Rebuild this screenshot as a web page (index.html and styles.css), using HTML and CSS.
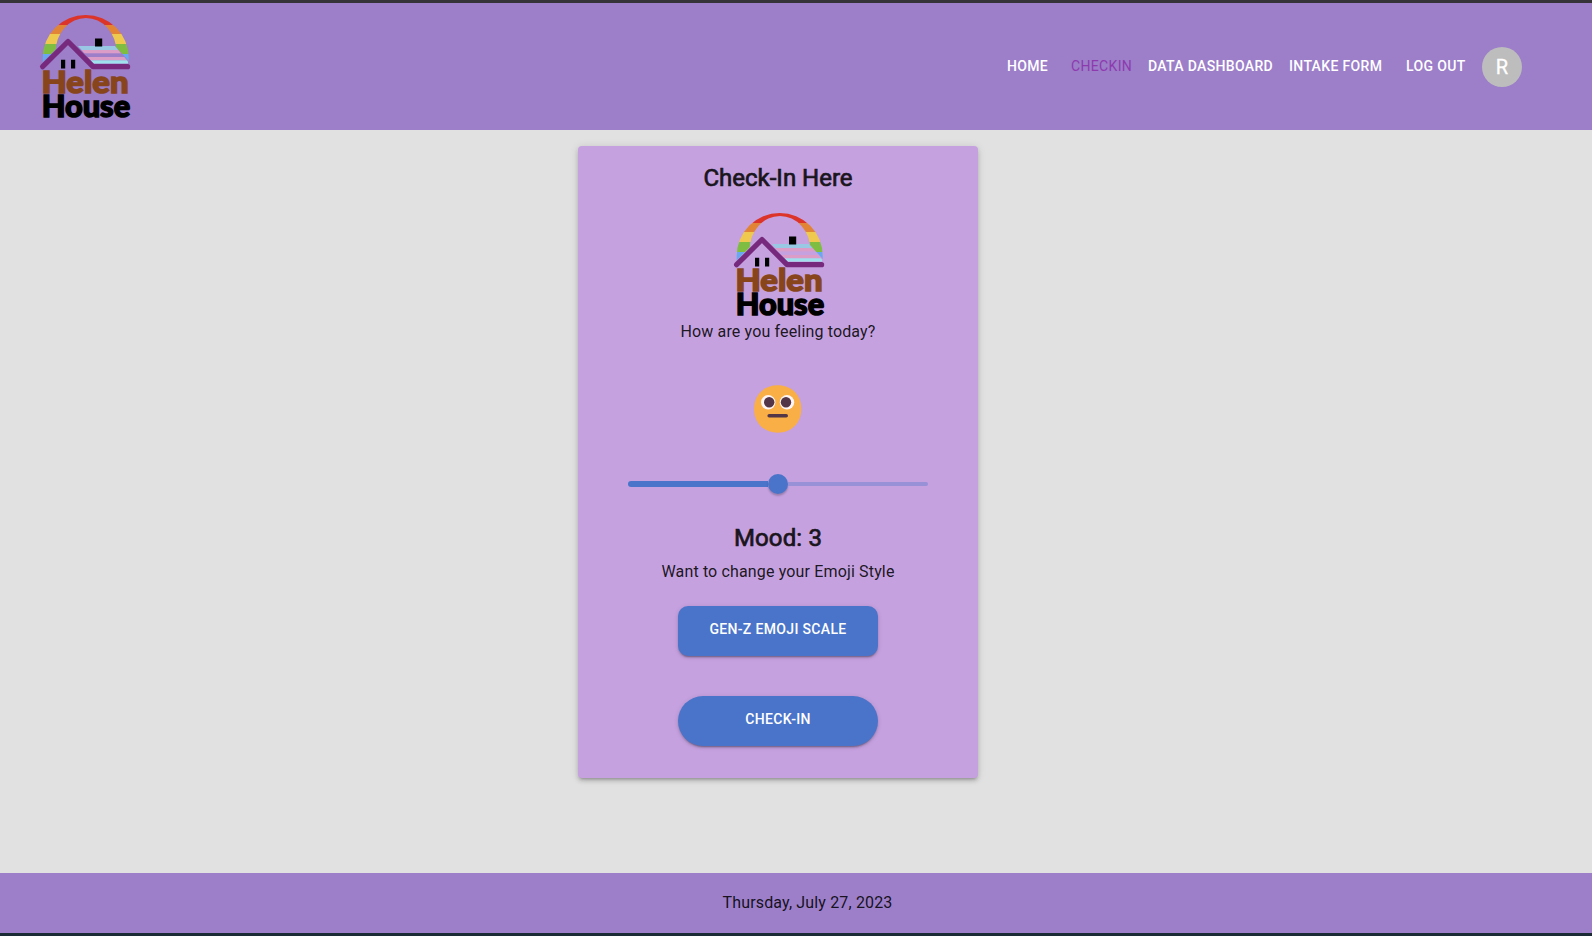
FILE: index.html
```html
<!DOCTYPE html>
<html lang="en">
<head>
<meta charset="utf-8">
<title>Helen House Check-In</title>
<link rel="stylesheet" href="styles.css">
</head>
<body>
<svg class="defs" aria-hidden="true">
  <defs>
    <clipPath id="arch"><path d="M0 0H92V49.5L75 31H31L27 23L0 50Z"/></clipPath>
    <clipPath id="flag"><path d="M38 31H75L88 46.5V49H54Z"/></clipPath>
    <clipPath id="ring"><path clip-rule="evenodd" d="M2.7 43a43 43 0 0 1 86 0v7h-86ZM15.5 37a30.5 34 0 0 1 61 0v13h-61Z"/></clipPath>
  </defs>
  <symbol id="logo" viewBox="0 0 92 106" overflow="visible">
    <g clip-path="url(#arch)"><g clip-path="url(#ring)">
      <rect width="92" height="10" fill="#dc3428"/>
      <rect y="10" width="92" height="9" fill="#e28436"/>
      <rect y="19" width="92" height="10" fill="#efc84e"/>
      <rect y="29" width="92" height="10" fill="#7fbd42"/>
      <rect y="39" width="92" height="11" fill="#68a8f0"/>
    </g></g>
    <g clip-path="url(#flag)">
      <rect y="31" width="92" height="4" fill="#98c8e4"/>
      <rect y="35" width="92" height="3.3" fill="#dc9cc8"/>
      <rect y="42" width="92" height="3.3" fill="#dc9cc8"/>
      <rect y="45.3" width="92" height="3.2" fill="#a0e0ec"/>
    </g>
    <path class="roof" d="M2.6 51.7L28 26.5L53 51.7H87.6"/>
    <path d="M55 23.6h7.2V31.5H55ZM21 44.8h4.2v8.6H21ZM31 44.8h4.2v8.6H31Z"/>
    <text class="logo-text brown" x="1.5" y="78" textLength="87" lengthAdjust="spacingAndGlyphs">Helen</text>
    <text class="logo-text" x="1.7" y="101.7" textLength="88.5" lengthAdjust="spacingAndGlyphs">House</text>
  </symbol>
</svg>
<header class="header">
  <svg class="logo"><use href="#logo"/></svg>
  <nav class="nav">
    <a class="link home">HOME</a>
    <a class="link active">CHECKIN</a>
    <a class="link">DATA DASHBOARD</a>
    <a class="link">INTAKE FORM</a>
    <a class="link logout">LOG OUT</a>
    <span class="avatar">R</span>
  </nav>
</header>
<main class="main">
  <section class="card">
    <h1 class="title">Check-In Here</h1>
    <svg class="logo card-logo"><use href="#logo"/></svg>
    <p class="text question">How are you feeling today?</p>
    <svg class="emoji" viewBox="0 0 48 48">
      <path fill="#f9ae46" d="M23.700 .3C37.500 .3 47.300 10 47.300 24S37.500 47.700 23.700 47.700 0 38 0 24 9.900 .3 23.700 .3Z"/>
      <circle cx="14.200" cy="17.300" r="7.200" fill="#fff5f4"/><circle cx="33" cy="17.300" r="7.200" fill="#fff5f4"/>
      <circle cx="15.200" cy="17.300" r="5.200" fill="#533647"/><circle cx="32" cy="17.300" r="5.200" fill="#533647"/>
      <path d="M15.200 30.700H32.200" stroke="#533647" stroke-width="3.600" stroke-linecap="round"/>
    </svg>
    <div class="slider"><div class="track"></div><div class="thumb"></div><div class="rail"></div></div>
    <h2 class="title mood">Mood: 3</h2>
    <p class="text">Want to change your Emoji Style</p>
    <button class="button">GEN-Z EMOJI SCALE</button>
    <button class="button round">CHECK-IN</button>
  </section>
</main>
<footer class="footer">Thursday, July 27, 2023</footer>
</body>
</html>
```
FILE: styles.css
```css
* { box-sizing: border-box; }
body {
  margin: 0;
  height: 936px;
  display: flex;
  flex-direction: column;
  overflow: hidden;
  background: #e1e1e1;
  border-top: 3px solid #353337;
  border-bottom: 3px solid #1b2b35;
  font-family: Roboto, "Liberation Sans", sans-serif;
  color: rgba(0, 0, 0, .87);
}
.defs { position: absolute; width: 0; height: 0; }
.header {
  flex: none;
  height: 127px;
  padding: 12px 70px 0 40px;
  display: flex;
  justify-content: space-between;
  align-items: flex-start;
  background: #9c7ec9;
}
.logo { display: block; flex: none; width: 92px; height: 106px; overflow: visible; }
.roof { fill: none; stroke: #772a7d; stroke-width: 5.2; stroke-linecap: round; stroke-linejoin: round; }
.logo-text { font: 900 31px Lato, sans-serif; fill: #000; stroke: #000; stroke-width: 1.5px; }
.brown { fill: #88451b; stroke: #88451b; }
.nav { display: flex; align-items: center; height: 40px; margin-top: 32px; }
.link {
  width: 141px;
  font-size: 14px;
  line-height: 24px;
  font-weight: 500;
  letter-spacing: .34px;
  color: #fff;
  white-space: nowrap;
  margin-top: -2px;
}
.home { width: 64px; }
.active { width: 77px; font-weight: 400; color: #8e3aae; }
.link:nth-child(4) { width: 117px; }
.logout { width: 76px; }
.avatar {
  width: 40px;
  height: 40px;
  border-radius: 50%;
  background: #bdbdbd;
  color: #fff;
  font-size: 20px;
  line-height: 40px;
  text-align: center;
  -webkit-text-stroke: .3px #fff;
}
.main { flex: 1; padding: 16px 0 0 578px; }
.card {
  width: 400px;
  height: 632px;
  padding-top: 16px;
  display: flex;
  flex-direction: column;
  align-items: center;
  border-radius: 4px;
  background: #c5a1df;
  box-shadow: 0 3px 3px -2px rgba(0,0,0,.2), 0 3px 4px rgba(0,0,0,.14), 0 1px 8px rgba(0,0,0,.12);
}
.title { margin: 0; font-size: 24px; line-height: 32px; font-weight: 400; -webkit-text-stroke: .7px currentColor; color: #1a151d; }
.card-logo { margin: 19px 0 0 4px; }
.text { margin: 0; font-size: 16px; line-height: 24px; font-weight: 400; letter-spacing: .15px; }
.question { margin-top: 1px; }
.emoji { width: 48px; height: 48px; margin-top: 41px; }
.slider { display: flex; align-items: center; width: 300px; height: 20px; margin-top: 41px; }
.track { width: 140px; height: 6px; border-radius: 3px 0 0 3px; background: #4a74ca; }
.thumb { width: 20px; height: 20px; border-radius: 50%; background: #4a74ca; box-shadow: 0 2px 2px rgba(0,0,0,.22); }
.rail { width: 140px; height: 4px; border-radius: 0 2px 2px 0; background: #9891d7; }
.mood { margin: 28px 0 6px; letter-spacing: .15px; }
.button {
  width: 200px;
  height: 50px;
  margin: 22px 0 18px;
  padding: 0 0 4px;
  border: 0;
  border-radius: 10px;
  background: #4a74ca;
  color: #fff;
  font: 500 14px Roboto, sans-serif;
  letter-spacing: .34px;
  box-shadow: 0 3px 1px -2px rgba(0,0,0,.2), 0 2px 2px rgba(0,0,0,.14), 0 1px 5px rgba(0,0,0,.12);
}
.round { border-radius: 25px; }
.footer {
  flex: none;
  height: 60px;
  padding-left: 23px;
  background: #9c7ec9;
  text-align: center;
  font-size: 16px;
  line-height: 59px;
  letter-spacing: .15px;
}
```
